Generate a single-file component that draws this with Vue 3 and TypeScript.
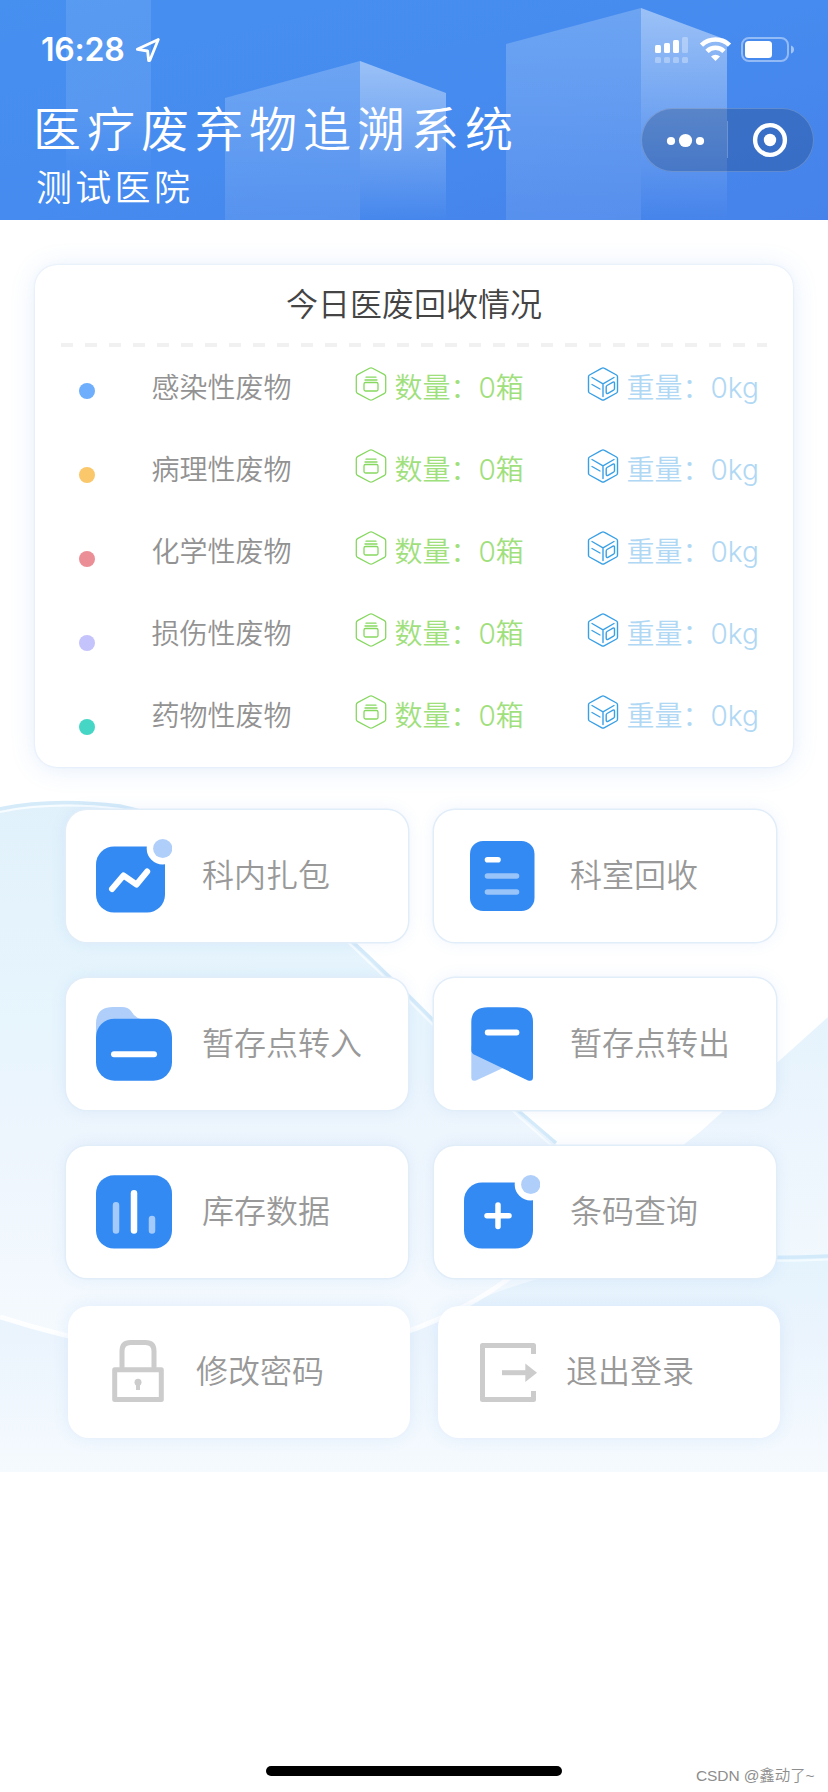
<script setup lang="ts">
interface WasteRow {
  name: string
  color: string
  count: number
  weight: number
}

interface MenuItem {
  key: string
  label: string
}

const wastes: WasteRow[] = [
  { name: '感染性废物', color: '#6eaefc', count: 0, weight: 0 },
  { name: '病理性废物', color: '#fac76b', count: 0, weight: 0 },
  { name: '化学性废物', color: '#eb8e96', count: 0, weight: 0 },
  { name: '损伤性废物', color: '#c5c3fb', count: 0, weight: 0 },
  { name: '药物性废物', color: '#45d6c6', count: 0, weight: 0 },
]

const menus: MenuItem[] = [
  { key: 'pack', label: '科内扎包' },
  { key: 'recycle', label: '科室回收' },
  { key: 'in', label: '暂存点转入' },
  { key: 'out', label: '暂存点转出' },
  { key: 'stock', label: '库存数据' },
  { key: 'query', label: '条码查询' },
]

const accountMenus: MenuItem[] = [
  { key: 'password', label: '修改密码' },
  { key: 'logout', label: '退出登录' },
]
</script>

<template>
  <div class="page">
    <header class="header">
      <svg class="skyline" viewBox="0 0 828 220" width="828" height="220">
        <defs>
          <linearGradient id="tower" x1="0" y1="0" x2="0" y2="1">
            <stop offset="0" stop-color="#fff" stop-opacity=".1" />
            <stop offset=".5" stop-color="#fff" stop-opacity=".1" />
            <stop offset=".8" stop-color="#fff" stop-opacity="0" />
          </linearGradient>
          <linearGradient id="faceLeft" x1="0" y1="0" x2="0" y2="1">
            <stop offset="0" stop-color="#fff" stop-opacity=".21" />
            <stop offset="1" stop-color="#fff" stop-opacity=".09" />
          </linearGradient>
          <linearGradient id="faceRight" x1="0" y1="0" x2="0" y2="1">
            <stop offset="0" stop-color="#fff" stop-opacity=".46" />
            <stop offset="1" stop-color="#fff" stop-opacity="0" />
          </linearGradient>
        </defs>
        <path d="M66 0H151V220H66Z" fill="url(#tower)" />
        <path d="M225 98L360 61V220H225Z" fill="url(#faceLeft)" />
        <path d="M360 61L446 93V220H360Z" fill="url(#faceRight)" />
        <path d="M506 44L641 8V220H506Z" fill="url(#faceLeft)" />
        <path d="M641 8L727 40V220H641Z" fill="url(#faceRight)" />
      </svg>

      <div class="status">
        <span class="time">16:28</span>
        <svg class="locate" viewBox="0 0 26 26" width="26" height="26">
          <path d="M23.300 2.500L2.300 12.300L12.600 14L13.600 23.500Q14.500 24 15 23Z" fill="none" stroke="#fff" stroke-width="2.800" stroke-linejoin="round" />
        </svg>
        <svg class="signals" viewBox="0 0 140 28" width="140" height="28" fill="#fff">
          <rect x="0" y="9" width="6" height="8" rx="1.5" />
          <rect x="9" y="7" width="6" height="10" rx="1.5" />
          <rect x="18" y="4" width="6" height="13" rx="1.5" />
          <g opacity=".3">
            <rect x="27" y="1" width="6" height="16" rx="1.5" />
            <rect x="0" y="21" width="6" height="6" rx="1.5" />
            <rect x="9" y="21" width="6" height="6" rx="1.5" />
            <rect x="18" y="21" width="6" height="6" rx="1.5" />
            <rect x="27" y="21" width="6" height="6" rx="1.5" />
          </g>
          <g fill="none" stroke="#fff" stroke-width="4.6">
            <path d="M46.500 9.200A20 20 0 0 1 74.500 9.200" />
            <path d="M52 15.300A12 12 0 0 1 69 15.300" />
          </g>
          <path d="M56 20.500A6.500 6.500 0 0 1 65 20.500L60.500 25Z" />
          <rect x="87" y="2" width="46" height="23" rx="7" fill="none" stroke="#fff" stroke-width="2" opacity=".42" />
          <rect x="90" y="5" width="27" height="17" rx="3.5" />
          <path d="M136 9.500Q139 10.500 139 13.500T136 17.500Z" opacity=".5" />
        </svg>
      </div>
      <h1 class="title">医疗废弃物追溯系统</h1>
      <p class="hospital">测试医院</p>

      <div class="capsule">
        <svg viewBox="0 0 173 64" width="173" height="64" fill="#fff">
          <circle cx="30" cy="33" r="4.100" />
          <circle cx="44.500" cy="32.500" r="6.600" />
          <circle cx="59" cy="33" r="4.100" />
          <path d="M86.500 13V50" stroke="#fff" stroke-opacity=".25" stroke-width="1" />
          <circle cx="129" cy="32" r="14.900" fill="none" stroke="#fff" stroke-width="4.400" />
          <circle cx="129" cy="32" r="6.200" />
        </svg>
      </div>
    </header>

    <main class="content">
      <svg class="waves" viewBox="0 0 828 682" width="828" height="682">
        <defs>
          <linearGradient id="hill" gradientUnits="userSpaceOnUse" x1="0" y1="10" x2="0" y2="560">
            <stop offset="0" stop-color="#e1f1fb" />
            <stop offset=".4" stop-color="#e7f5fd" />
            <stop offset=".6" stop-color="#edf5fd" />
            <stop offset="1" stop-color="#f5fafe" />
          </linearGradient>
          <linearGradient id="hillRight" gradientUnits="userSpaceOnUse" x1="0" y1="220" x2="0" y2="500">
            <stop offset="0" stop-color="#e5f3fc" />
            <stop offset=".4" stop-color="#ecf5fd" />
            <stop offset="1" stop-color="#f2f9fe" />
          </linearGradient>
          <linearGradient id="base" gradientUnits="userSpaceOnUse" x1="0" y1="460" x2="0" y2="682">
            <stop offset="0" stop-color="#e4f3fd" />
            <stop offset=".4" stop-color="#ebf4fd" />
            <stop offset="1" stop-color="#f5fafe" />
          </linearGradient>
        </defs>
        <path d="M828 227L700 342L560 450V560H828Z" fill="url(#hillRight)" />
        <path d="M0 19C40 11 80 11 120 17C220 40 290 95 355 156C385 184 400 199 418 217L432 231C470 268 500 305 520 324L555 354L680 450V682H0Z" fill="url(#hill)" />
        <path d="M0 18.700C40 10.500 80 11 120 16C220 38 290 93 356 155C385 182 402 199 419 216L433 230C470 267 500 304 521 323L556 353" fill="none" stroke="#d5ebfa" stroke-width="3.500" />
        <path d="M0 22C40 14 80 14 120 19C220 42 290 97 354 158C383 186 400 201 417 219L431 233C468 270 498 307 518 326L553 357" fill="none" stroke="#f7fcff" stroke-width="2" />
        <path d="M0 527C150 575 330 590 465 516C570 465 690 466 828 466V682H0Z" fill="url(#base)" />
        <path d="M0 527C150 575 330 590 465 516Q490 503 520 480" fill="none" stroke="#fff" stroke-opacity=".85" stroke-width="5" />
        <path d="M740 467Q790 468 828 466" fill="none" stroke="#d3eafb" stroke-width="3.500" />
        <path d="M740 470.500Q790 471.500 828 469.500" fill="none" stroke="#f4fbff" stroke-width="2" />
      </svg>

      <section class="summary">
        <h2 class="summary-title">今日医废回收情况</h2>
        <div class="divider"></div>
        <div class="summary-body">
          <div class="dots">
            <i v-for="row in wastes" :key="row.name" class="dot" :style="{ background: row.color }"></i>
          </div>
          <ul class="rows">
            <li v-for="row in wastes" :key="row.name" class="row">
              <span class="name">{{ row.name }}</span>
              <span class="metric count">
                <svg viewBox="0 0 32 34" width="32" height="34" fill="none" stroke="#86d860" stroke-width="1.300" stroke-linejoin="round" stroke-linecap="round">
                  <path d="M14.500 1.200Q16 .4 17.500 1.200L29.500 7.600Q30.700 8.400 30.700 9.800V24.200Q30.700 25.600 29.500 26.400L17.500 32.800Q16 33.600 14.500 32.800L2.500 26.400Q1.300 25.600 1.300 24.200V9.800Q1.300 8.400 2.500 7.600Z" />
                  <path d="M11 10.200H21M10 13H22" />
                  <rect x="9" y="15.500" width="14" height="8.500" rx="1.500" />
                </svg>
                <span>数量：{{ row.count }}箱</span>
              </span>
              <span class="metric weight">
                <svg viewBox="0 0 32 34" width="32" height="34" fill="none" stroke="#3aa0e6" stroke-width="1.400" stroke-linejoin="round" stroke-linecap="round">
                  <path d="M14.500 1.300Q16 .4 17.500 1.300L29.500 8Q30.500 8.700 30.500 9.800V24.200Q30.500 25.300 29.500 26L17.500 32.700Q16 33.600 14.500 32.700L2.500 26Q1.500 25.300 1.500 24.200V9.800Q1.500 8.700 2.500 8Z" />
                  <path d="M5 10.500L16 16.800L27 10.500M16 17V29.500M5 17.500L13 22" />
                  <path d="M20 18.500L26 15.200Q27.500 14.600 27.500 16.200V21.500Q27.500 22.600 26.500 23.200L21 26.300Q19.200 27 19.200 25.300V20Q19.200 19 20 18.500Z" />
                </svg>
                <span>重量：{{ row.weight }}kg</span>
              </span>
            </li>
          </ul>
        </div>
      </section>

      <nav class="menu">
        <button v-for="item in menus" :key="item.key" class="card" type="button">
          <svg viewBox="0 0 76 76" width="76" height="76">
            <template v-if="item.key === 'pack' || item.key === 'query'">
              <rect x="0" y="8.500" width="69" height="66" rx="18" fill="#338af3" />
              <circle cx="66.700" cy="10.500" r="16" fill="#fff" />
              <circle cx="66.700" cy="10.500" r="9.600" fill="#afcffa" />
              <path v-if="item.key === 'pack'" d="M16 51L27.500 37.500L40.500 46.500L51.200 33.500" fill="none" stroke="#fff" stroke-width="6" stroke-linecap="round" stroke-linejoin="round" />
              <path v-else d="M23 41.700H45M34 31V52.500" stroke="#fff" stroke-width="5.500" stroke-linecap="round" />
            </template>
            <template v-else-if="item.key === 'recycle'">
              <rect x="6" y="3" width="64.500" height="70" rx="13" fill="#338af3" />
              <g stroke-width="5.600" stroke-linecap="round">
                <path d="M23.500 21.800H34" stroke="#fff" />
                <path d="M23.500 38H52.500M23.500 54H52.500" stroke="#99c4f9" />
              </g>
            </template>
            <template v-else-if="item.key === 'in'">
              <path d="M0 30V18Q0 1 17 1H26Q32 1 35 5Q39 12 45 13V30Z" fill="#afcffa" />
              <rect x="0" y="12.700" width="76" height="62" rx="18.500" fill="#338af3" />
              <path d="M18 48.200H58" stroke="#fff" stroke-width="6" stroke-linecap="round" />
            </template>
            <template v-else-if="item.key === 'out'">
              <path d="M7.300 40V71Q7.300 76 12 74.500L50 57Z" fill="#afcffa" />
              <path d="M7.300 46V16Q7.300 1.300 24 1.300H53Q69 1.300 69 16V71Q69 76 64 74.500L11 49Q7.300 47.500 7.300 44Z" fill="#338af3" />
              <path d="M23.700 26.500H52.500" stroke="#fff" stroke-width="5.800" stroke-linecap="round" />
            </template>
            <template v-else>
              <rect x="0" y="1.300" width="76" height="73.200" rx="18" fill="#338af3" />
              <g stroke-width="6.500" stroke-linecap="round">
                <path d="M20 31.300V56.500M56 45V56.500" stroke="#a3cafa" />
                <path d="M38 19.300V56.500" stroke="#fff" />
              </g>
            </template>
          </svg>
          <span>{{ item.label }}</span>
        </button>
      </nav>

      <nav class="menu account">
        <button v-for="item in accountMenus" :key="item.key" class="card" type="button">
          <svg viewBox="0 0 76 76" width="76" height="76" fill="none" stroke="#ccc" stroke-width="5">
            <template v-if="item.key === 'password'">
              <rect x="8.700" y="35.700" width="46.600" height="29.800" stroke-linejoin="round" />
              <path d="M16 35V17Q16 8.500 24.500 8.500H39.500Q48 8.500 48 17V35" />
              <circle cx="32" cy="48.300" r="3.500" fill="#ccc" stroke="none" />
              <path d="M32 49V56" stroke-width="4" />
            </template>
            <template v-else>
              <path d="M57.500 20V11.500H6.500V65.500H57.500V57" stroke-linejoin="round" />
              <path d="M26 38.700H50" />
              <path d="M49.300 29.500L61 38.700L49.300 48Z" fill="#ccc" stroke="none" />
            </template>
          </svg>
          <span>{{ item.label }}</span>
        </button>
      </nav>
    </main>

    <footer class="footer">
      <span class="home-bar"></span>
      <span class="watermark">CSDN @鑫动了~</span>
    </footer>
  </div>
</template>

<style>
body {
  margin: 0;
  background: #fff;
}
</style>

<style scoped>
.page {
  display: flex;
  flex-direction: column;
  width: 828px;
  height: 1792px;
  overflow: hidden;
  background: #fff;
  font-family: Inter, "Noto Sans CJK SC", sans-serif;
  font-weight: 350;
}

h1,
h2,
p,
ul {
  margin: 0;
  padding: 0;
  font-weight: 350;
}

.header {
  position: relative;
  box-sizing: border-box;
  height: 220px;
  padding: 30px 33px 0;
  color: #fff;
  background: linear-gradient(165deg, #4690f0 0%, #468bef 50%, #4682ea 100%);
}

.skyline {
  position: absolute;
  inset: 0;
}

.status {
  position: relative;
  display: flex;
  align-items: center;
  height: 40px;
  padding-left: 8px;
}

.time {
  width: 93px;
  font-size: 32px;
  font-weight: 600;
  line-height: 40px;
  letter-spacing: -0.2px;
}

.locate {
  margin-left: 1px;
}

.signals {
  margin-left: 494px;
}

.title {
  position: relative;
  margin-top: 30px;
  font-size: 48px;
  line-height: 60px;
  letter-spacing: 6px;
}

.hospital {
  position: relative;
  margin-top: 4px;
  padding-left: 3px;
  font-size: 36px;
  line-height: 48px;
  letter-spacing: 3.3px;
}

.capsule {
  position: absolute;
  top: 108px;
  left: 641px;
  width: 173px;
  height: 64px;
  border-radius: 32px;
  background: rgba(30, 60, 110, 0.3);
  box-shadow: inset 0 0 0 1px rgba(255, 255, 255, 0.2);
}

.capsule svg {
  display: block;
}

.content {
  position: relative;
  box-sizing: border-box;
  height: 1252px;
  padding-top: 45px;
}

.waves {
  position: absolute;
  bottom: 0;
  left: 0;
}

.summary {
  position: relative;
  box-sizing: border-box;
  width: 758px;
  height: 502px;
  margin-left: 35px;
  padding: 17px 26px 0;
  border-radius: 22px;
  background: #fff;
  box-shadow: 0 0 2px rgba(120, 170, 230, 0.3), 0 2px 26px rgba(90, 150, 230, 0.16);
}

.summary-title {
  color: #444;
  font-size: 32px;
  line-height: 46px;
  text-align: center;
}

.divider {
  height: 4px;
  margin-top: 15px;
  background: repeating-linear-gradient(90deg, #f1f1f1 0 12px, transparent 12px 24px);
}

.summary-body {
  display: flex;
}

.dots {
  display: flex;
  flex-direction: column;
  gap: 68px;
  width: 91px;
  padding: 36px 0 0 18px;
  box-sizing: border-box;
}

.dot {
  width: 16px;
  height: 16px;
  border-radius: 50%;
}

.rows {
  width: 620px;
  list-style: none;
}

.row {
  display: grid;
  grid-template-columns: 204px 232px 1fr;
  align-items: center;
  height: 82px;
  font-size: 28px;
  line-height: 40px;
  white-space: nowrap;
}

.name {
  color: #929292;
}

.metric {
  display: flex;
  align-items: center;
  gap: 7px;
}

.metric svg {
  margin-top: -9px;
}

.count {
  color: #a0e07c;
}

.weight {
  color: #b0d8f4;
}

.menu {
  position: relative;
  display: grid;
  grid-template-columns: 342px 342px;
  gap: 36px 26px;
  margin: 43px 0 0 66px;
}

.card {
  display: flex;
  align-items: center;
  gap: 30px;
  height: 132px;
  padding: 0 0 0 30px;
  border: 0;
  border-radius: 21px;
  background: #fff;
  box-shadow: 0 0 0 1.500px #e1edf8, 0 0 16px rgba(90, 150, 230, 0.12);
  color: #999;
  font: inherit;
  font-size: 32px;
}

.card span {
  margin-top: -6px;
}

.account {
  column-gap: 28px;
  margin: 28px 0 0 68px;
}

.account .card {
  gap: 14px;
  padding-left: 38px;
  box-shadow: 0 0 16px rgba(90, 150, 230, 0.12);
}

.footer {
  display: flex;
  align-items: flex-end;
  flex: 1;
  padding-left: 266px;
}

.home-bar {
  width: 296px;
  height: 10px;
  margin-bottom: 16px;
  border-radius: 5px;
  background: #000;
}

.watermark {
  margin: 0 0 5px 134px;
  color: #8d8d8d;
  font-family: "Liberation Sans", "Noto Sans CJK SC", sans-serif;
  font-size: 15.500px;
  line-height: 22px;
  letter-spacing: -0.1px;
  white-space: nowrap;
}
</style>
